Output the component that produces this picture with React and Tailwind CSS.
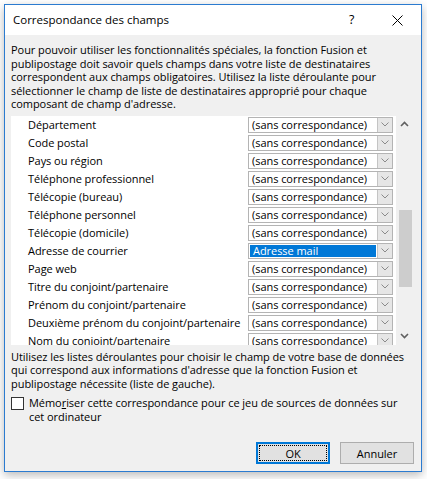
import React from "react";

const rows = [
  ["Département", null],
  ["Code postal", null],
  ["Pays ou région", null],
  ["Téléphone professionnel", null],
  ["Télécopie (bureau)", null],
  ["Téléphone personnel", null],
  ["Télécopie (domicile)", null],
  ["Adresse de courrier", "Adresse mail"],
  ["Page web", null],
  ["Titre du conjoint/partenaire", null],
  ["Prénom du conjoint/partenaire", null],
  ["Deuxième prénom du conjoint/partenaire", null],
  ["Nom du conjoint/partenaire", null],
];

function Chevron() {
  return (
    <svg width="8" height="5" viewBox="0 0 8 5" className="block">
      <path d="M0.5 0.5 L4 4 L7.5 0.5" fill="none" stroke="#8a8a8a" strokeWidth="1" />
    </svg>
  );
}

function Combo({ value }) {
  return (
    <div className="flex h-[16px] w-[145px] shrink-0 border border-[#b4b4b4] bg-white">
      {value ? (
        <div className="flex-1 flex items-center bg-white p-[1px]">
          <div className="h-full w-full bg-[#0078d7] text-white flex items-center pl-[3px] leading-none whitespace-nowrap">
            {value}
          </div>
        </div>
      ) : (
        <div className="flex-1 flex items-center pl-[3px] leading-none whitespace-nowrap">(sans correspondance)</div>
      )}
      <div className="w-[15px] shrink-0 border-l border-[#c4c4c4] bg-[#e6e6e6] flex items-center justify-center">
        <Chevron />
      </div>
    </div>
  );
}

export default function App() {
  return (
    <div
      className="w-[427px] h-[479px] bg-white overflow-hidden text-[11px] tracking-[-0.05px] text-black"
      style={{ fontFamily: '"Open Sans", "Noto Sans", sans-serif' }}
    >
      <div className="ml-[4px] mt-[4px] w-[418px] h-[468px] border border-[#2b7bd0] bg-[#f0f0f0] flex flex-col shadow-[0_3px_9px_rgba(0,0,0,0.28)]">
        {/* title bar */}
        <div className="h-[30px] bg-white flex items-center shrink-0 relative">
          <span className="pl-[8px] text-[11.5px] tracking-normal">Correspondance des champs</span>
          <span className="absolute left-[344px] top-[6px] text-[12.5px]">?</span>
          <svg width="11" height="11" viewBox="0 0 11 11" className="absolute left-[387px] top-[10px]">
            <path d="M0.5 0.5 L10.5 10.5 M10.5 0.5 L0.5 10.5" stroke="#000" strokeWidth="1" />
          </svg>
        </div>

        <div className="flex-1 flex flex-col pl-[6px] pr-[7px] pb-[7px]">
          <p className="mt-[8px] leading-[13.5px]">
            Pour pouvoir utiliser les fonctionnalités spéciales, la fonction Fusion et publipostage doit savoir quels champs dans votre liste de destinataires correspondent aux champs obligatoires. Utilisez la liste déroulante pour sélectionner le champ de liste de destinataires approprié pour chaque composant de champ d'adresse.
          </p>

          <div className="mt-[5px] flex h-[229px]">
            <div className="w-[385px] bg-white overflow-hidden pt-[1px] flex flex-col gap-[2px]">
              {rows.map(([label, value]) => (
                <div key={label} className="flex items-center h-[16px] shrink-0">
                  <span className="pl-[17px] w-[237px] shrink-0 whitespace-nowrap leading-none">{label}</span>
                  <Combo value={value} />
                </div>
              ))}
            </div>
            <div className="w-[17px] flex flex-col bg-[#f0f0f0]">
              <div className="h-[17px] flex items-center justify-center">
                <svg width="9" height="6" viewBox="0 0 9 6">
                  <path d="M1 5 L4.5 1.5 L8 5" fill="none" stroke="#606060" strokeWidth="1.6" />
                </svg>
              </div>
              <div className="flex-1 relative">
                <div className="absolute left-[3px] top-[77px] w-[13px] h-[77px] bg-[#cdcdcd]" />
              </div>
              <div className="h-[17px] flex items-center justify-center">
                <svg width="9" height="6" viewBox="0 0 9 6">
                  <path d="M1 1 L4.5 4.5 L8 1" fill="none" stroke="#606060" strokeWidth="1.6" />
                </svg>
              </div>
            </div>
          </div>

          <p className="mt-[5px] leading-[13.5px]">
            Utilisez les listes déroulantes pour choisir le champ de votre base de données qui correspond aux informations d'adresse que la fonction Fusion et publipostage nécessite (liste de gauche).
          </p>

          <div className="mt-[6px] flex items-start gap-[5px]">
            <div className="w-[13px] h-[13px] shrink-0 border border-[#333] bg-white mt-[1px]" />
            <span className="leading-[13.5px]">
              Mémo<span className="underline">r</span>iser cette correspondance pour ce jeu de sources de données sur cet ordinateur
            </span>
          </div>

          <div className="mt-auto flex justify-end gap-[10px]">
            <div className="w-[74px] h-[22px] border-2 border-[#0078d7] bg-[#e1e1e1] p-[1px]">
              <div className="w-full h-full border border-dotted border-black flex items-center justify-center leading-none">
                OK
              </div>
            </div>
            <div className="w-[74px] h-[22px] border border-[#adadad] bg-[#e1e1e1] flex items-center justify-center leading-none">
              Annuler
            </div>
          </div>
        </div>
      </div>
    </div>
  );
}
